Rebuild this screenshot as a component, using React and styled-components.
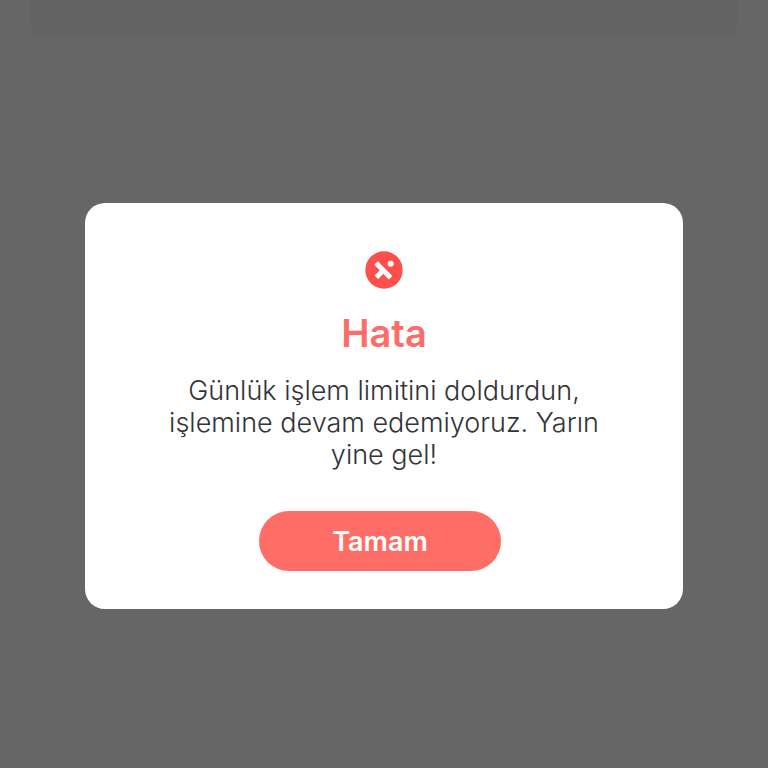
import React, { useState } from "react";
import styled, { createGlobalStyle } from "styled-components";

function ErrorIcon() {
  return (
    <IconSvg viewBox="0 0 114 114" aria-hidden="true">
      <circle cx="57" cy="57" r="56" fill="#fd4f4b" />
      <path
        d="M33 36 L77 80 M34 79 L57 56"
        stroke="#fff"
        strokeWidth="15"
        fill="none"
      />
      <circle cx="77" cy="38" r="9" fill="#fff" />
    </IconSvg>
  );
}

function App() {
  const [open, setOpen] = useState(true);

  return (
    <Page>
      <GlobalStyle />
      <Panel />
      {open && (
        <Overlay>
          <Dialog
            role="alertdialog"
            aria-modal="true"
            aria-labelledby="dialog-title"
            aria-describedby="dialog-message"
          >
            <ErrorIcon />
            <Title id="dialog-title">Hata</Title>
            <Message id="dialog-message">
              Günlük işlem limitini doldurdun, işlemine devam edemiyoruz. Yarın
              yine gel!
            </Message>
            <ConfirmButton type="button" onClick={() => setOpen(false)}>
              Tamam
            </ConfirmButton>
          </Dialog>
        </Overlay>
      )}
    </Page>
  );
}

const GlobalStyle = createGlobalStyle`
  * {
    box-sizing: border-box;
  }

  body {
    margin: 0;
    font-family: Inter, "Liberation Sans", sans-serif;
  }
`;

const Page = styled.div`
  min-height: 100vh;
  padding: 0 30px;
  background-color: #fff;
`;

const Panel = styled.div`
  height: 36px;
  border-radius: 0 0 12px 12px;
  background-color: #f7f7f7;
`;

const Overlay = styled.div`
  position: fixed;
  inset: 0;
  padding: 44px 85px 0;
  display: flex;
  align-items: center;
  justify-content: center;
  background-color: rgba(0, 0, 0, 0.6);
`;

const Dialog = styled.div`
  width: 100%;
  max-width: 640px;
  padding: 48px 80px 38px;
  display: flex;
  flex-direction: column;
  align-items: center;
  border-radius: 20px;
  background-color: #fff;
`;

const IconSvg = styled.svg`
  width: 38px;
  height: 38px;
`;

const Title = styled.h1`
  margin: 22px 0 20px;
  color: #fb6d66;
  font-size: 38px;
  font-weight: 600;
  line-height: 44px;
`;

const Message = styled.p`
  margin: 0;
  color: #333338;
  font-size: 27px;
  font-weight: 300;
  line-height: 32px;
  text-align: center;
`;

const ConfirmButton = styled.button`
  width: 242px;
  height: 60px;
  margin: 40px 8px 0 0;
  border: none;
  border-radius: 30px;
  background-color: #ff6e66;
  color: #fff;
  font-family: inherit;
  font-size: 27px;
  font-weight: 600;
  cursor: pointer;
`;

export default App;
